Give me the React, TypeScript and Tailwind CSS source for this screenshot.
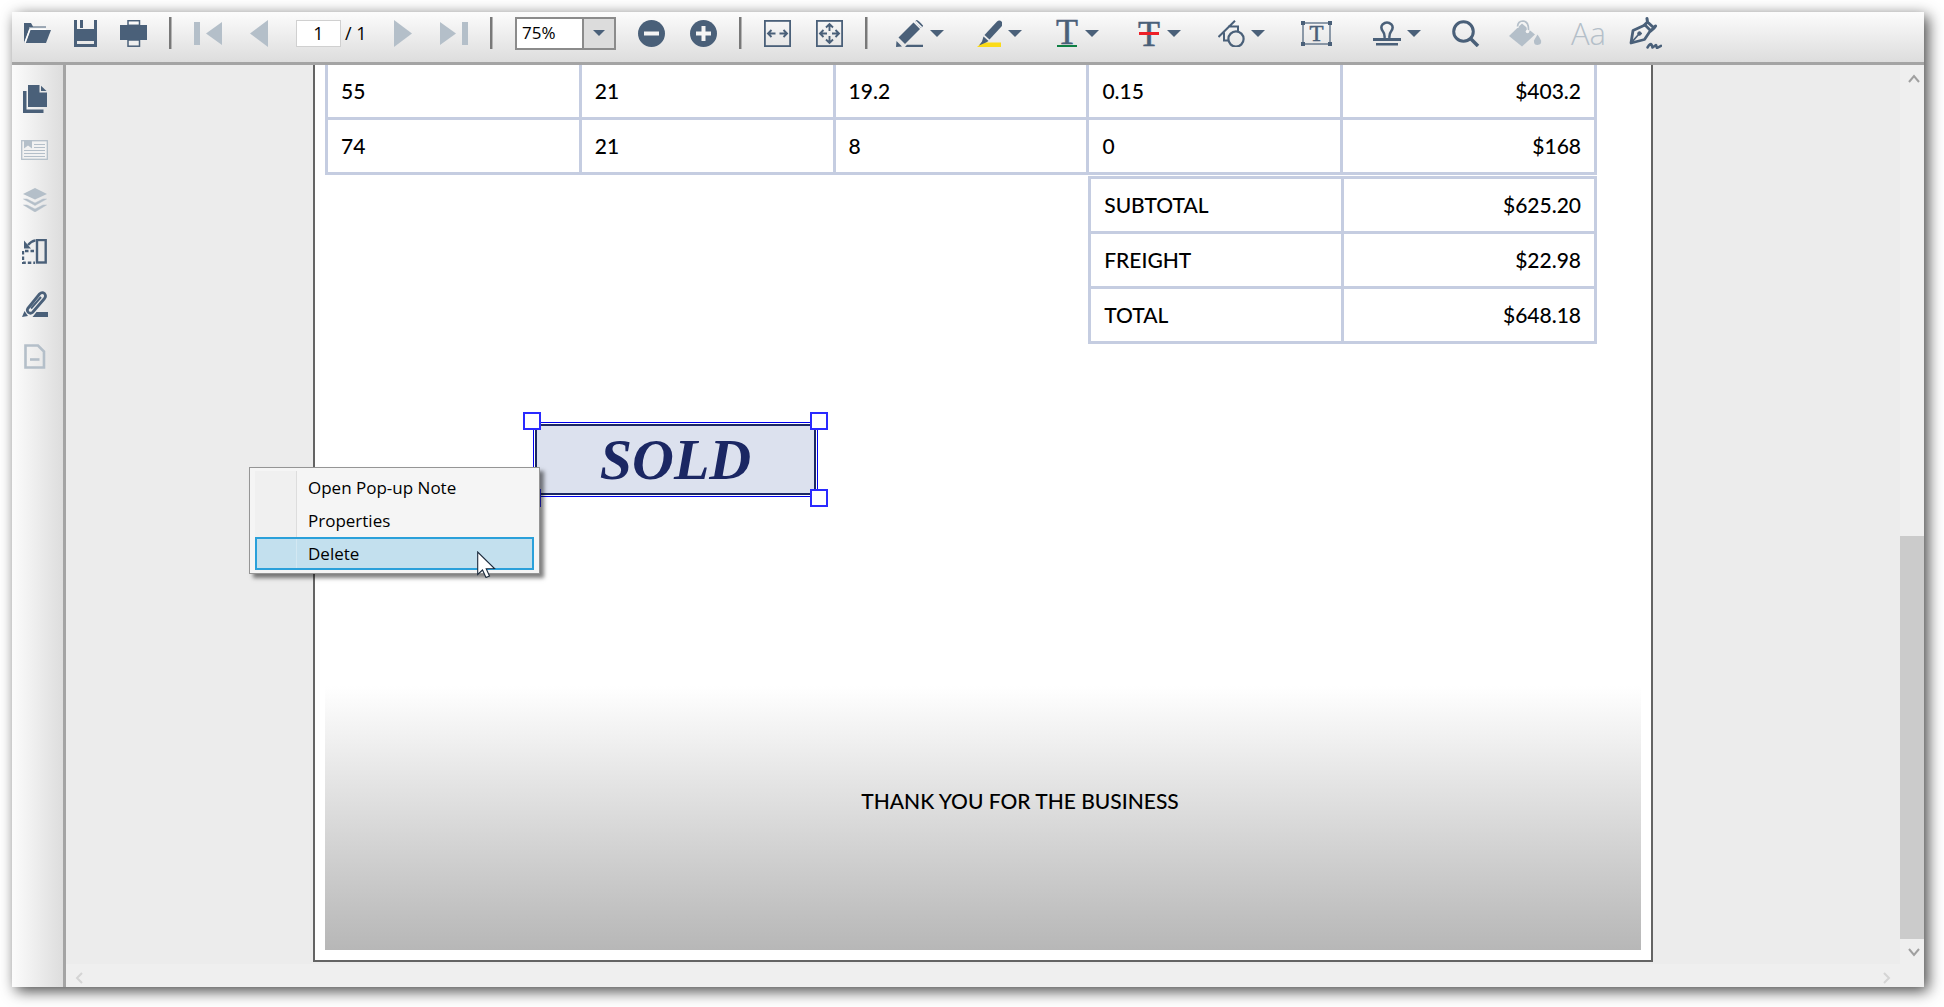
import React from "react";

const INK = "#4a6079";
const PALE = "#b4bfc9";

function Separator() {
  return <div className="h-8 w-[3px] shrink-0 border-r border-[#b5b5b5] bg-[#787878]" />;
}

function IconButton({
  label,
  disabled = false,
  children,
}: {
  label: string;
  disabled?: boolean;
  children: React.ReactNode;
}) {
  return (
    <button type="button" aria-label={label} disabled={disabled} className="flex shrink-0 items-center">
      {children}
    </button>
  );
}

function Caret() {
  return (
    <svg width="14" height="7" viewBox="0 0 14 7" aria-hidden="true">
      <path d="M0 0H14L7 7Z" fill={INK} />
    </svg>
  );
}

function MenuTool({ label, className, children }: { label: string; className: string; children: React.ReactNode }) {
  return (
    <div className={className}>
      <button type="button" aria-label={label} aria-haspopup="menu" className="flex items-center gap-1.5">
        {children}
        <Caret />
      </button>
    </div>
  );
}

function Toolbar() {
  return (
    <header className="flex h-[53px] shrink-0 items-center gap-[22px] border-b-[3px] border-[#a4a4a4] bg-linear-to-b from-[#fcfcfc] to-[#dddddd] pb-2 pl-3 font-['Open_Sans',sans-serif] text-black">
      <div className="flex shrink-0 items-center gap-[23px]">
        <IconButton label="Open">
          <svg width="27" height="20" viewBox="0 0 27 20">
            <path d="M0 20V0H7L9 3.500H22V5H5.500L0 20Z" fill={INK} />
            <path d="M5 4.500H22" stroke="#9aa7b4" />
            <path d="M6.500 7H27L22 20H1.800Z" fill={INK} />
            <path d="M1 19.500L5.800 6.500H22" fill="none" stroke="#fff" strokeWidth="1.200" />
          </svg>
        </IconButton>
        <IconButton label="Save">
          <svg width="23" height="27" viewBox="0 0 23 27">
            <path fillRule="evenodd" fill={INK} d="M0 0H3V9H20V0H23V27H0ZM3 21V24H20V21Z" />
            <rect x="6" y="0" width="3" height="8" fill={INK} />
          </svg>
        </IconButton>
        <IconButton label="Print">
          <svg width="27" height="27" viewBox="0 0 27 27">
            <path fill={INK} d="M0 5H27V20H0Z" />
            <rect x="8" y="0.700" width="11.500" height="4.600" fill="#fafafa" stroke={INK} strokeWidth="1.500" />
            <rect x="8" y="20" width="11.500" height="6.200" fill="#efefef" stroke={INK} strokeWidth="1.500" />
          </svg>
        </IconButton>
      </div>
      <Separator />
      <nav aria-label="Pages" className="flex shrink-0 items-center gap-7">
        <IconButton label="First page" disabled>
          <svg width="28" height="23" viewBox="0 0 28 23">
            <path d="M0 0H6V23H0ZM28 0V23L12 11.500Z" fill={PALE} />
          </svg>
        </IconButton>
        <IconButton label="Previous page" disabled>
          <svg width="18" height="27" viewBox="0 0 18 27">
            <path d="M18 0V27L0 13.500Z" fill={PALE} />
          </svg>
        </IconButton>
        <div className="flex items-center gap-1">
          <input
            aria-label="Page number"
            defaultValue="1"
            className="h-[27px] w-[45px] border border-[#d0d0d0] bg-white text-center text-[18px] leading-6 outline-none"
          />
          <span className="w-[21px] text-[18px] leading-6 whitespace-nowrap">/ 1</span>
        </div>
        <IconButton label="Next page" disabled>
          <svg width="18" height="27" viewBox="0 0 18 27">
            <path d="M0 0V27L18 13.500Z" fill={PALE} />
          </svg>
        </IconButton>
        <IconButton label="Last page" disabled>
          <svg width="28" height="23" viewBox="0 0 28 23">
            <path d="M22 0H28V23H22ZM0 0V23L16 11.500Z" fill={PALE} />
          </svg>
        </IconButton>
      </nav>
      <Separator />
      <div className="relative shrink-0">
        <select
          aria-label="Zoom"
          defaultValue="75%"
          className="block h-[33px] w-[101px] appearance-none border-2 border-[#8b8b8b] bg-white pl-[5px] text-[17px] leading-6 outline-none"
        >
          <option>50%</option>
          <option>75%</option>
          <option>100%</option>
        </select>
        <span className="pointer-events-none absolute inset-y-0 right-0 flex w-[34px] items-center justify-center border-2 border-[#8b8b8b] bg-[#dcdcdc]">
          <svg width="12" height="6" viewBox="0 0 12 6" aria-hidden="true">
            <path d="M0 0H12L6 6Z" fill={INK} />
          </svg>
        </span>
      </div>
      <div className="flex shrink-0 items-center gap-[25px]">
        <IconButton label="Zoom out">
          <svg width="27" height="27" viewBox="0 0 27 27">
            <circle cx="13.500" cy="13.500" r="13.500" fill={INK} />
            <path d="M6 13.500H21" stroke="#f4f4f4" strokeWidth="4" />
          </svg>
        </IconButton>
        <IconButton label="Zoom in">
          <svg width="27" height="27" viewBox="0 0 27 27">
            <circle cx="13.500" cy="13.500" r="13.500" fill={INK} />
            <path d="M6 13.500H21M13.500 6V21" stroke="#f4f4f4" strokeWidth="4" />
          </svg>
        </IconButton>
      </div>
      <Separator />
      <div className="flex shrink-0 items-center gap-[25px]">
        <IconButton label="Fit width">
          <svg width="27" height="27" viewBox="0 0 27 27" fill="none" stroke={INK}>
            <rect x="0.900" y="0.900" width="25.200" height="25.200" strokeWidth="1.800" />
            <path d="M4 13.500H11.500M7.500 10L4 13.500L7.500 17M15.500 13.500H23M19.500 10L23 13.500L19.500 17" strokeWidth="1.900" />
          </svg>
        </IconButton>
        <IconButton label="Fit page">
          <svg width="27" height="27" viewBox="0 0 27 27" fill="none" stroke={INK}>
            <rect x="0.900" y="0.900" width="25.200" height="25.200" strokeWidth="1.800" />
            <path
              d="M4.500 13.500H11M7.500 10L4 13.500L7.500 17M16 13.500H22.500M19.500 10L23 13.500L19.500 17M13.500 4.500V11M10 7.500L13.500 4L17 7.500M13.500 16V22.500M10 19.500L13.500 23L17 19.500"
              strokeWidth="1.900"
            />
          </svg>
        </IconButton>
      </div>
      <Separator />
      <div className="flex shrink-0 items-center gap-[35px] pl-1.5">
        <MenuTool label="Ink" className="w-[46px]">
          <svg width="28" height="27" viewBox="0 0 28 27">
            <path d="M2.500 17.500L17.500 2.500L24 9L9 24Z" fill={INK} />
            <path d="M19 1.500L20.500 0Q22 -0.300 27 5.500Q27.500 6.500 25 8" fill={INK} />
            <path d="M19.500 1.200L25.800 7.500" stroke="#fafafa" strokeWidth="1.400" />
            <path d="M0.500 21L6 26.500L0 27Z" fill={INK} />
            <path d="M9 27L11 24.800H27V27Z" fill={INK} />
          </svg>
        </MenuTool>
        <MenuTool label="Highlight" className="w-[45px]">
          <svg width="25" height="27" viewBox="0 0 25 27">
            <path d="M0 27L5 22.500H24V27Z" fill="#fbdb18" />
            <path d="M7.500 15L20 1.500Q22.500 -0.500 25 2Q26.500 4 24.500 6.500L12.500 19.500Z" fill={INK} />
            <path d="M6.500 16.500L11.500 21L9 22.500L2 25.500L5 21.500Z" fill={INK} />
          </svg>
        </MenuTool>
        <MenuTool label="Underline text" className="w-[47px]">
          <svg width="22" height="27" viewBox="0 0 22 27" className="overflow-visible">
            <text x="-1" y="24" fontFamily="Liberation Serif, serif" fontSize="36" stroke={INK} strokeWidth="0.500" fill={INK}>T</text>
            <rect x="0" y="25" width="20" height="2" fill="#0e8043" />
          </svg>
        </MenuTool>
        <MenuTool label="Strike out text" className="w-[44px]">
          <svg width="22" height="25" viewBox="0 0 22 25" className="overflow-visible">
            <text x="-1" y="25" fontFamily="Liberation Serif, serif" fontSize="36" stroke={INK} strokeWidth="0.500" fill={INK}>T</text>
            <rect x="0" y="11" width="20" height="3" fill="#ee2027" />
          </svg>
        </MenuTool>
        <MenuTool label="Shapes" className="w-[48px]">
          <svg width="27" height="27" viewBox="0 0 27 27" fill="none" stroke={INK} strokeWidth="2">
            <path d="M0.500 17L17 0.800M10 6.500H20V11.500M6 12.500V20.500H10" />
            <circle cx="18" cy="19" r="7.600" strokeWidth="2.200" />
          </svg>
        </MenuTool>
        <div className="flex w-[37px]">
          <IconButton label="Text box">
            <svg width="31" height="25" viewBox="0 0 31 25">
              <rect x="2" y="2" width="27" height="21" fill="none" stroke={INK} strokeWidth="1.200" />
              <path d="M0 0H4V4H0ZM27 0H31V4H27ZM0 21H4V25H0ZM27 21H31V25H27Z" fill={INK} />
              <text x="15.500" y="20" textAnchor="middle" fontFamily="Liberation Serif, serif" fontSize="23" stroke={INK} strokeWidth="0.500" fill={INK}>T</text>
            </svg>
          </IconButton>
        </div>
        <MenuTool label="Stamp" className="w-[47px]">
          <svg width="28" height="25" viewBox="0 0 28 25">
            <path d="M11.500 17Q12 13 10 10.500Q7 6.500 9.500 3.500Q14 -0.500 18.500 3.500Q21 6.500 18 10.500Q16 13 16.500 17" fill="none" stroke={INK} strokeWidth="2.500" />
            <path d="M0 17H28V20H0ZM3 22H25V24.500H3Z" fill={INK} />
          </svg>
        </MenuTool>
      </div>
      <div className="flex shrink-0 items-center gap-[29px] pl-2.5">
        <IconButton label="Search">
          <svg width="28" height="27" viewBox="0 0 28 27" fill="none" stroke={INK}>
            <circle cx="11.500" cy="11.500" r="9.800" strokeWidth="3" />
            <path d="M18.500 18.500L26 26" strokeWidth="3.500" />
          </svg>
        </IconButton>
        <IconButton label="Fill color" disabled>
          <svg width="33" height="27" viewBox="0 0 33 27">
            <path d="M0 16L13 3.500L26 14.500L13 26.500Z" fill={PALE} />
            <path d="M8 8Q7 1.500 13 1Q20 1 19.500 11" fill="none" stroke="#f4f4f4" strokeWidth="3.500" />
            <path d="M8.500 6.500Q9 1 14 1Q20 1.500 19.500 11" fill="none" stroke={PALE} strokeWidth="1.700" />
            <circle cx="18.500" cy="11.500" r="1.800" fill="#f4f4f4" />
            <path d="M28.500 14.500Q26 18.500 25 20.500Q24.500 25 28.500 25Q33 24.500 32 20.500Q30.500 17 28.500 14.500Z" fill={PALE} />
          </svg>
        </IconButton>
        <button type="button" aria-label="Font" disabled className="w-[29px] text-[31px] leading-8 font-light text-[#b4bfc9]">
          Aa
        </button>
        <IconButton label="Signature">
          <svg width="33" height="32" viewBox="0 0 33 32" fill="none" stroke={INK} strokeLinecap="round" strokeLinejoin="round">
            <path d="M2 26L4 13.500L16 8L21.500 13.500L15.500 22.500Z" strokeWidth="2.800" />
            <path d="M15.500 8L18.500 5L25 11L21.500 14M18.500 5L18 1.500M25 11L26.500 9" strokeWidth="3" />
            <path d="M2 26L10 17" strokeWidth="1.800" />
            <circle cx="10.500" cy="16.500" r="1.800" fill={INK} strokeWidth="1" />
            <path d="M18.500 30.500Q21.500 25.500 22.500 27.500L23.500 30.500L27 28L28 31L32 28.800" strokeWidth="2.500" />
          </svg>
        </IconButton>
      </div>
    </header>
  );
}

function Sidebar() {
  return (
    <aside className="flex w-[54px] shrink-0 flex-col items-center gap-[27px] border-r-[3px] border-[#a4a4a4] bg-linear-to-r from-[#fcfcfc] to-[#dddddd] pt-5 pr-1.5">
      <IconButton label="Thumbnails">
        <svg width="24" height="28" viewBox="0 0 24 28" fill={INK}>
          <path d="M0 6H3.500V24.500H20.500V28H0Z" />
          <path d="M5 0H16.500V7.500H24V22H5Z" />
          <path d="M18 0.800L23.500 6H18Z" />
        </svg>
      </IconButton>
      <IconButton label="Bookmarks" disabled>
        <svg width="27" height="21" viewBox="0 0 27 21" className="overflow-visible">
          <rect x="0.700" y="0.700" width="25.600" height="18.600" fill="#f2f2f2" stroke={PALE} strokeWidth="1.300" />
          <path d="M3 0H11V8.500L7 5.500L3 8.500Z" fill={PALE} />
          <path d="M13 4.500H24M13 7.500H24M3 10.500H24M3 13.500H24M3 16.500H24" stroke={PALE} strokeWidth="1.200" />
        </svg>
      </IconButton>
      <IconButton label="Layers" disabled>
        <svg width="24" height="24" viewBox="0 0 24 24">
          <path d="M12 0L24 6L12 11.500L0 6Z" fill={PALE} />
          <path d="M0.500 11L4 11L12 15L20 11L23.500 11L12 17.500ZM0.500 17L4 17L12 21L20 17L23.500 17L12 24Z" fill={PALE} stroke={PALE} strokeWidth="0.500" />
        </svg>
      </IconButton>
      <IconButton label="Rotate pages">
        <svg width="25" height="25" viewBox="0 0 25 25" fill="none" stroke={INK}>
          <rect x="15" y="1" width="8.700" height="22.500" strokeWidth="2.400" />
          <path d="M12 12H1V23.700H13" strokeWidth="2.400" strokeDasharray="3.500 2" />
          <path d="M13.500 1.300Q9 2 6 6" strokeWidth="2.300" />
          <path d="M2 1.500V9.500H9Z" fill={INK} stroke="none" />
        </svg>
      </IconButton>
      <IconButton label="Annotations">
        <svg width="26" height="26" viewBox="0 0 26 26">
          <path d="M5.800 17.500L17.500 3Q20 0.500 22.500 2.500Q24.500 5 22.500 7.500L10.500 21.500Q8.500 23 6.500 21.500Q4.500 19.500 5.800 17.500Z" fill="none" stroke={INK} strokeWidth="2.800" />
          <path d="M9 17.500L19 6" stroke={INK} strokeWidth="2" />
          <path d="M2.500 20L6 25L0 26ZM10.500 26L14.500 21H26V26Z" fill={INK} />
        </svg>
      </IconButton>
      <IconButton label="Attachments" disabled>
        <svg width="22" height="25" viewBox="0 0 22 25" fill="none" stroke={PALE} strokeWidth="2.600">
          <path d="M1.500 1.500H14L20 7.500V23.500H1.500Z" />
          <path d="M6 15.500H15.500" />
        </svg>
      </IconButton>
    </aside>
  );
}

const rows = [
  ["55", "21", "19.2", "0.15", "$403.2"],
  ["74", "21", "8", "0", "$168"],
];

const totals = [
  ["SUBTOTAL", "$625.20"],
  ["FREIGHT", "$22.98"],
  ["TOTAL", "$648.18"],
];

function Stamp() {
  return (
    <div className="absolute top-[357px] left-[218px] h-[75px] w-[285px] border border-[#0000ee] bg-white p-px">
      <div className="flex h-full items-center justify-center rounded-[4px] border-2 border-[#1b2763] bg-[#dce1ee] font-['Liberation_Serif',serif] text-[58px] leading-none font-bold text-[#1b2763] italic">
        SOLD
      </div>
      <span className="absolute -top-[11px] -left-[11px] size-[18px] border-2 border-[#2a2aff] bg-white" />
      <span className="absolute -top-[11px] -right-[11px] size-[18px] border-2 border-[#2a2aff] bg-white" />
      <span className="absolute -bottom-[11px] -left-[11px] size-[18px] border-2 border-[#2a2aff] bg-white" />
      <span className="absolute -right-[11px] -bottom-[11px] size-[18px] border-2 border-[#2a2aff] bg-white" />
    </div>
  );
}

const menuItems = ["Open Pop-up Note", "Properties", "Delete"];

function ContextMenu() {
  return (
    <div
      role="menu"
      className="absolute top-[402px] -left-[66px] w-[291px] border border-[#959595] bg-[#f5f5f5] px-[5px] py-[3px] font-['Open_Sans',sans-serif] text-[17px] leading-6 text-black shadow-[4px_4px_4px_rgba(0,0,0,0.5)]"
    >
      {menuItems.map((item) => (
        <button
          key={item}
          type="button"
          role="menuitem"
          className={
            item === "Delete"
              ? "flex h-[33px] w-full items-center border-2 border-[#2aa0da] bg-[#c3e0ee] text-left"
              : "flex h-[33px] w-full items-center text-left"
          }
        >
          <span
            className={
              item === "Delete"
                ? "mr-[11px] h-full w-10 border-r border-[#d3e8f2]"
                : "mr-[11px] h-full w-[42px] border-r border-[#dddddd] bg-[#f0f0f0]"
            }
          />
          {item}
        </button>
      ))}
      <svg width="19" height="27" viewBox="0 0 19 27" className="absolute top-[83px] left-[227px]" aria-hidden="true">
        <path d="M0.700 1V23.500L5.500 19L9 26.500L12.500 25L9.200 17.700L17.500 17.500Z" fill="#fff" stroke="#1b2a3c" strokeWidth="1.100" />
      </svg>
    </div>
  );
}

function DocumentPage() {
  const cell = "h-[55px] border-3 border-[#c5cde1] px-[13px]";
  return (
    <article className="relative mb-0.5 flex w-full max-w-[1340px] flex-col border-2 border-t-0 border-[#646464] bg-white px-[10px] pb-[10px] font-['Lato',sans-serif] text-[21px] leading-7 font-medium text-black">
      <div className="-mt-[3px] w-full max-w-[1272px]">
        <table className="w-full table-fixed border-collapse">
          <tbody>
            {rows.map((row) => (
              <tr key={row[0]}>
                {row.map((value, i) => (
                  <td key={i} className={i === 4 ? `${cell} text-right` : cell}>
                    {value}
                  </td>
                ))}
              </tr>
            ))}
          </tbody>
        </table>
        <table className="mt-px ml-auto w-2/5 table-fixed border-collapse">
          <tbody>
            {totals.map(([name, amount]) => (
              <tr key={name}>
                <th scope="row" className={`${cell} text-left font-medium`}>
                  {name}
                </th>
                <td className={`${cell} text-right`}>{amount}</td>
              </tr>
            ))}
          </tbody>
        </table>
      </div>
      <footer className="mt-auto flex h-[264px] items-center justify-center bg-linear-to-b from-white to-[#b7b7b7] pb-[34px] pl-[74px]">
        THANK YOU FOR THE BUSINESS
      </footer>
      <Stamp />
      <ContextMenu />
    </article>
  );
}

function Chevron({ d, color }: { d: string; color: string }) {
  return (
    <svg width="12" height="12" viewBox="0 0 12 12" fill="none" stroke={color} strokeWidth="2" aria-hidden="true">
      <path d={d} />
    </svg>
  );
}

export default function App() {
  return (
    <div className="h-screen overflow-hidden bg-white pt-3 pr-5 pb-5 pl-3">
      <div className="flex h-full flex-col shadow-[4px_4px_14px_rgba(0,0,0,0.73)]">
        <Toolbar />
        <div className="flex min-h-0 flex-1">
          <Sidebar />
          <div className="flex min-w-0 flex-1 flex-col bg-[#efefef]">
            <div className="flex min-h-0 flex-1">
              <main className="flex min-w-0 flex-1 justify-center overflow-hidden bg-[#ececec]">
                <DocumentPage />
              </main>
              <div className="flex w-6 shrink-0 flex-col items-center">
                <button type="button" aria-label="Scroll up" className="pt-2 pl-1">
                  <Chevron d="M1 9L6 3L11 9" color="#a0a0a0" />
                </button>
                <div className="mt-auto h-[403px] w-full bg-[#cbcbcb]" />
                <button type="button" aria-label="Scroll down" className="flex h-[25px] items-center pl-1">
                  <Chevron d="M1 3L6 9L11 3" color="#a0a0a0" />
                </button>
              </div>
            </div>
            <div className="flex h-[23px] shrink-0 items-center justify-between pt-1 pr-[31px] pl-[7px]">
              <button type="button" aria-label="Scroll left">
                <Chevron d="M9 1L4 6L9 11" color="#d4d4d4" />
              </button>
              <button type="button" aria-label="Scroll right">
                <Chevron d="M3 1L8 6L3 11" color="#d4d4d4" />
              </button>
            </div>
          </div>
        </div>
      </div>
    </div>
  );
}
